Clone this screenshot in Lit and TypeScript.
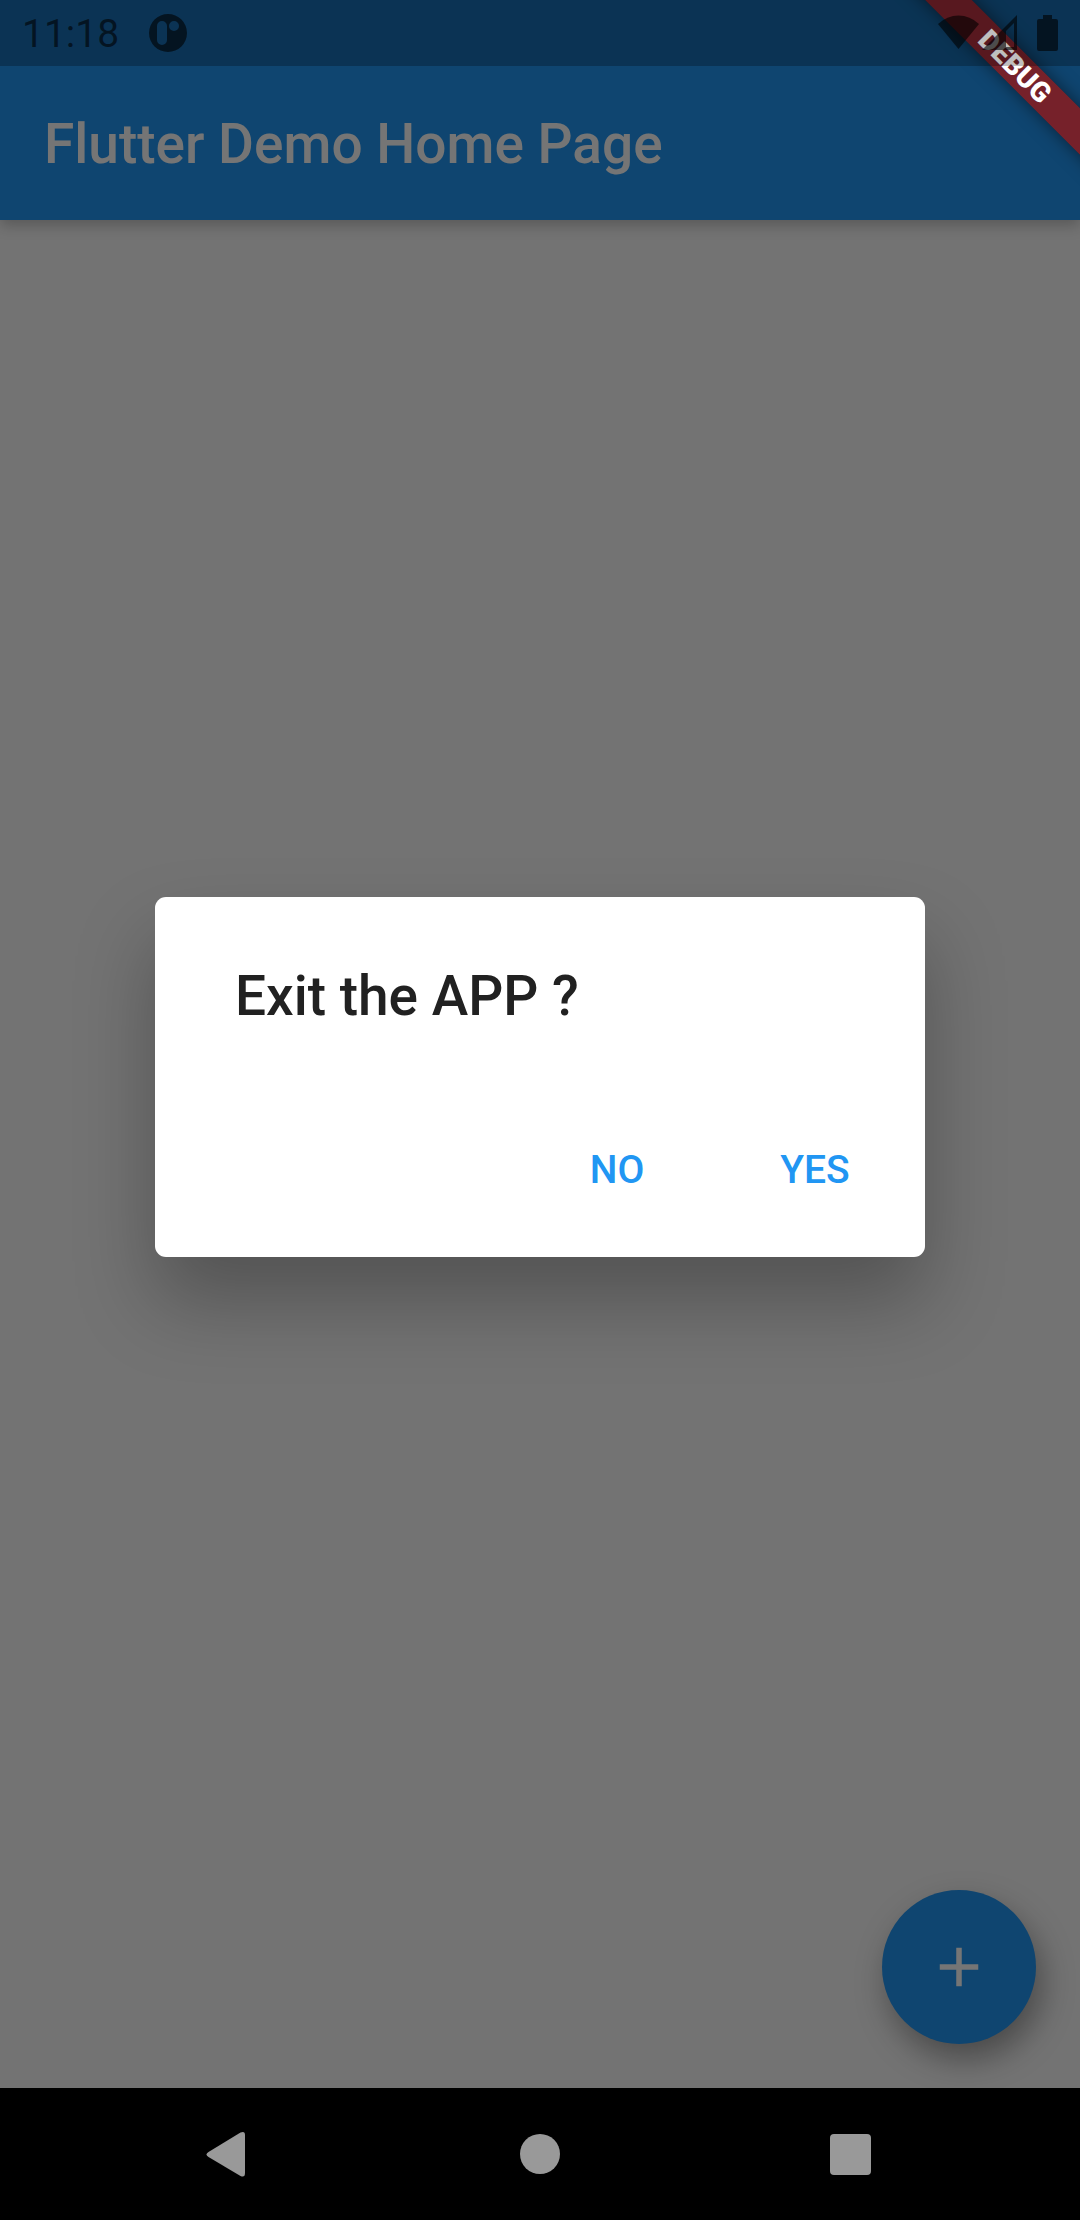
import { LitElement, html, css } from "lit";
import { customElement, state } from "lit/decorators.js";

@customElement("status-bar")
export class StatusBar extends LitElement {
  static styles = css`
    :host {
      display: flex;
      align-items: center;
      height: 66px;
      padding: 0 22px;
      box-sizing: border-box;
      background: rgba(0, 0, 0, 0.25);
      color: rgba(0, 0, 0, 0.6);
      font-size: 39px;
      line-height: 46px;
    }
    time {
      padding-top: 2px;
    }
    .app-icon {
      margin-left: 30px;
    }
    .spacer {
      flex: 1;
    }
    .system {
      display: flex;
      gap: 3px;
    }
    .system .battery {
      margin-left: 17px;
    }
    svg {
      display: block;
      fill: currentColor;
    }
  `;

  render() {
    return html`
      <time>11:18</time>
      <svg class="app-icon" width="38" height="38" viewBox="0 0 38 38" aria-hidden="true">
        <path
          fill-rule="evenodd"
          d="M19 0a19 19 0 1 1 0 38a19 19 0 0 1 0-38zM13 7a5 5 0 0 0-5 5v14a5 5 0 0 0 10 0V12a5 5 0 0 0-5-5zM25 7a5 5 0 1 0 0 10a5 5 0 0 0 0-10z"
        />
      </svg>
      <span class="spacer"></span>
      <div class="system">
        <svg width="41" height="38" viewBox="0 0 41 38" aria-label="Wi-Fi">
          <path d="M0 10Q9 1.500 20.500 1.500T41 10L20.500 35z" />
        </svg>
        <svg width="35" height="38" viewBox="0 0 35 38" aria-label="Mobile signal">
          <path fill-rule="evenodd" d="M35 1V36H0zM32 9L24 17V33H32z" />
        </svg>
        <svg class="battery" width="21" height="38" viewBox="0 0 21 38" aria-label="Battery">
          <path d="M6 1h9v4h4a2 2 0 0 1 2 2v28a2 2 0 0 1-2 2H2a2 2 0 0 1-2-2V7a2 2 0 0 1 2-2h4z" />
        </svg>
      </div>
    `;
  }
}

@customElement("nav-bar")
export class NavBar extends LitElement {
  static styles = css`
    :host {
      display: flex;
      justify-content: center;
      gap: 178px;
      height: 132px;
      background: #000;
    }
    button {
      display: grid;
      place-items: center;
      width: 132px;
      padding: 0;
      border: 0;
      background: none;
      color: #999;
    }
    svg {
      display: block;
      fill: currentColor;
    }
  `;

  render() {
    return html`
      <button aria-label="Back">
        <svg width="48" height="48" viewBox="2 0 48 48">
          <path d="M4.500 22 36.500 2.500Q41 .500 41 5V43Q41 48 36.500 46L4.500 27Q.500 24.500 4.500 22z" />
        </svg>
      </button>
      <button aria-label="Home">
        <svg width="40" height="40" viewBox="0 0 40 40"><circle cx="20" cy="20" r="20" /></svg>
      </button>
      <button aria-label="Overview">
        <svg width="42" height="42" viewBox="0 0 42 42"><rect x="1" y="1" width="41" height="41" rx="4" /></svg>
      </button>
    `;
  }
}

@customElement("exit-dialog")
export class ExitDialog extends LitElement {
  static styles = css`
    :host {
      display: block;
      min-width: 770px;
      border-radius: 11px;
      background: #fff;
      box-shadow: 0 44px 80px rgba(0, 0, 0, 0.28);
    }
    h2 {
      margin: 0;
      padding: 67px 66px 75px 80px;
      color: #212121;
      font-size: 55px;
      line-height: 64px;
      font-weight: 500;
    }
    .actions {
      display: flex;
      justify-content: flex-end;
      gap: 22px;
      padding: 0 22px 22px;
    }
    button {
      min-width: 176px;
      height: 132px;
      padding: 2px 22px 0;
      border: 0;
      border-radius: 11px;
      background: none;
      color: #2196f3;
      font: inherit;
      font-size: 39px;
      line-height: 46px;
      font-weight: 500;
    }
  `;

  private close() {
    this.dispatchEvent(new CustomEvent("close"));
  }

  render() {
    return html`
      <h2>Exit the APP ?</h2>
      <div class="actions">
        <button @click=${this.close}>NO</button>
        <button @click=${this.close}>YES</button>
      </div>
    `;
  }
}

@customElement("app-root")
export class AppRoot extends LitElement {
  static styles = css`
    :host {
      display: flex;
      flex-direction: column;
      min-height: 100vh;
      font-family: Roboto, "Liberation Sans", sans-serif;
    }
    .screen {
      position: relative;
      overflow: hidden;
      flex: 1;
      display: flex;
      flex-direction: column;
      background: #fafafa;
    }
    header {
      padding: 68px 44px 0;
      background: #2196f3;
      box-shadow: 0 5px 14px rgba(0, 0, 0, 0.24);
    }
    h1 {
      margin: 0;
      color: #fff;
      font-size: 55px;
      line-height: 152px;
      font-weight: 500;
    }
    main {
      flex: 1;
      display: flex;
      align-items: flex-end;
      justify-content: flex-end;
      padding: 44px;
    }
    .fab {
      display: grid;
      place-items: center;
      width: 154px;
      height: 154px;
      padding: 0;
      border: 0;
      border-radius: 50%;
      background: #2196f3;
      color: #fff;
      box-shadow: 6px 15px 32px rgba(0, 0, 0, 0.36);
    }
    .scrim {
      position: absolute;
      inset: 0;
      display: grid;
      place-items: center;
      padding-top: 66px;
      background: rgba(0, 0, 0, 0.54);
    }
    .banner {
      position: absolute;
      top: 50px;
      right: -135px;
      width: 400px;
      height: 33px;
      transform: rotate(45deg);
      background: rgba(154, 21, 19, 0.75);
      box-shadow: 0 0 17px rgba(0, 0, 0, 0.5);
      color: #fff;
      font-size: 28px;
      line-height: 33px;
      font-weight: 900;
      text-align: center;
    }
    status-bar {
      position: absolute;
      inset: 0 0 auto;
    }
  `;

  @state() private open = true;

  render() {
    return html`
      <div class="screen">
        <header><h1>Flutter Demo Home Page</h1></header>
        <main>
          <button class="fab" aria-label="Increment">
            <svg width="66" height="66" viewBox="0 0 24 24" fill="currentColor">
              <path d="M19 13h-6v6h-2v-6H5v-2h6V5h2v6h6v2z" />
            </svg>
          </button>
        </main>
        ${this.open
          ? html`<div class="scrim">
              <exit-dialog role="dialog" aria-label="Exit the APP ?" @close=${() => (this.open = false)}></exit-dialog>
            </div>`
          : null}
        <div class="banner">DEBUG</div>
        <status-bar></status-bar>
      </div>
      <nav-bar></nav-bar>
    `;
  }
}
